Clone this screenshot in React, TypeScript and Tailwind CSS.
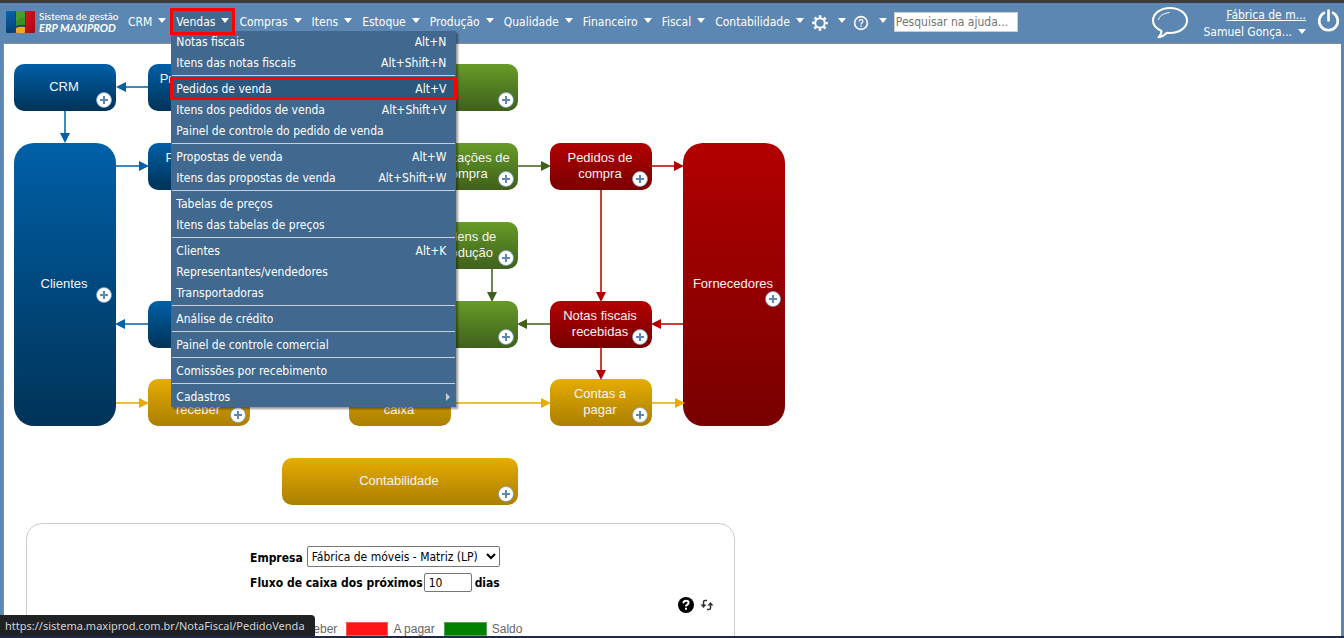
import { Fragment, useState } from "react";

type Tone = "blue" | "green" | "red" | "yellow";

interface FlowNode {
  id: string;
  lines: string[];
  tone: Tone;
  x: number;
  y: number;
  w?: number;
  h?: number;
  plusY?: number;
  noPlus?: boolean;
}

interface MenuEntry {
  label: string;
  keys?: string;
  submenu?: boolean;
}

const TONES: Record<Tone, string> = {
  blue: "from-[#0060a8] to-[#003358]",
  green: "from-[#669c28] to-[#3f601b]",
  red: "from-[#b30000] to-[#780000]",
  yellow: "from-[#e6ac00] to-[#ab7f00]",
};

const STROKES: Record<Tone, string> = {
  blue: "#0060a8",
  green: "#3f601b",
  red: "#b30000",
  yellow: "#e6ac00",
};

const NODES: FlowNode[] = [
  { id: "crm", lines: ["CRM"], tone: "blue", x: 9, y: 20 },
  { id: "propostas", lines: ["Propostas de", "venda"], tone: "blue", x: 143, y: 20 },
  { id: "planejamento", lines: [], tone: "green", x: 411, y: 20 },
  { id: "clientes", lines: ["Clientes"], tone: "blue", x: 9, y: 99, h: 283, plusY: 152 },
  { id: "pedidos-venda", lines: ["Pedidos de", "venda"], tone: "blue", x: 143, y: 99 },
  { id: "solicitacoes", lines: ["Solicitações de", "compra"], tone: "green", x: 411, y: 99 },
  { id: "pedidos-compra", lines: ["Pedidos de", "compra"], tone: "red", x: 545, y: 99 },
  { id: "fornecedores", lines: ["Fornecedores"], tone: "red", x: 678, y: 99, h: 283, plusY: 156 },
  { id: "ordens", lines: ["Ordens de", "produção"], tone: "green", x: 411, y: 178 },
  { id: "saidas", lines: [], tone: "blue", x: 143, y: 257 },
  { id: "estoque", lines: [], tone: "green", x: 411, y: 257 },
  { id: "notas-recebidas", lines: ["Notas fiscais", "recebidas"], tone: "red", x: 545, y: 257 },
  { id: "receber", lines: ["Contas a", "receber"], tone: "yellow", x: 143, y: 335 },
  { id: "caixa", lines: ["Fluxo de", "caixa"], tone: "yellow", x: 344, y: 335, noPlus: true },
  { id: "pagar", lines: ["Contas a", "pagar"], tone: "yellow", x: 545, y: 335 },
  { id: "contabilidade", lines: ["Contabilidade"], tone: "yellow", x: 277, y: 414, w: 236 },
];

// [tone, x1, y1, x2, y2], the head sits at the second point
const ARROWS: [Tone, number, number, number, number][] = [
  ["blue", 143, 43, 111, 43],
  ["blue", 60, 67, 60, 99],
  ["blue", 111, 122, 144, 122],
  ["blue", 143, 280, 110, 280],
  ["yellow", 111, 359, 144, 359],
  ["green", 513, 122, 546, 122],
  ["green", 487, 225, 487, 258],
  ["green", 545, 280, 512, 280],
  ["red", 647, 122, 679, 122],
  ["red", 596, 146, 596, 258],
  ["red", 678, 280, 646, 280],
  ["red", 596, 304, 596, 336],
  ["yellow", 446, 359, 546, 359],
  ["yellow", 647, 359, 680, 359],
];

const MENUS = ["CRM", "Vendas", "Compras", "Itens", "Estoque", "Produção", "Qualidade", "Financeiro", "Fiscal", "Contabilidade"];

const VENDAS: MenuEntry[][] = [
  [
    { label: "Notas fiscais", keys: "Alt+N" },
    { label: "Itens das notas fiscais", keys: "Alt+Shift+N" },
  ],
  [
    { label: "Pedidos de venda", keys: "Alt+V" },
    { label: "Itens dos pedidos de venda", keys: "Alt+Shift+V" },
    { label: "Painel de controle do pedido de venda" },
  ],
  [
    { label: "Propostas de venda", keys: "Alt+W" },
    { label: "Itens das propostas de venda", keys: "Alt+Shift+W" },
  ],
  [{ label: "Tabelas de preços" }, { label: "Itens das tabelas de preços" }],
  [{ label: "Clientes", keys: "Alt+K" }, { label: "Representantes/vendedores" }, { label: "Transportadoras" }],
  [{ label: "Análise de crédito" }],
  [{ label: "Painel de controle comercial" }],
  [{ label: "Comissões por recebimento" }],
  [{ label: "Cadastros", submenu: true }],
];

function Caret() {
  return (
    <svg className="mb-0.5 h-[5px] w-2 shrink-0" viewBox="0 0 8 5" fill="#fff">
      <path d="M0 0h8L4 5z" />
    </svg>
  );
}

function Logo() {
  return (
    <a href="#" className="flex items-center gap-1 text-white">
      <svg className="h-[22px] w-[29px]" viewBox="0 0 29 22">
        <defs>
          <linearGradient id="lb" x1="0" y1="0" x2="0" y2="1">
            <stop offset="0" stopColor="#0a62ac" />
            <stop offset="1" stopColor="#064075" />
          </linearGradient>
          <linearGradient id="lr" x1="0" y1="0" x2="1" y2="1">
            <stop offset="0" stopColor="#d8141c" />
            <stop offset="1" stopColor="#a30a12" />
          </linearGradient>
        </defs>
        <rect width="9" height="22" rx="1" fill="url(#lb)" />
        <rect x="9" width="11" height="22" fill="#17446b" />
        <path d="M10 0h9v14q-5-1-9 1z" fill="#3f8f27" />
        <path d="M10 0h9v6q-5 0-9 4z" fill="#55a532" opacity=".6" />
        <path d="M10 17q4-2 9-1v5q0 1-1 1h-7q-1 0-1-1z" fill="#f0ab1c" />
        <rect x="20" width="9" height="22" rx="1" fill="url(#lr)" />
      </svg>
      <span className="flex w-[78px] flex-col whitespace-nowrap font-['Lato'] leading-3">
        <span className="text-[10px] font-medium">Sistema de gestão</span>
        <span className="text-[11px] font-bold italic">ERP MAXIPROD</span>
      </span>
    </a>
  );
}

function VendasMenu() {
  return (
    <div className="absolute left-0 top-[22px] z-20 w-[285px] bg-[#41698f] shadow-[2px_2px_2px_rgba(0,0,0,0.4)]">
      {VENDAS.map((group, i) => (
        <Fragment key={group[0].label}>
          {i > 0 && <hr className="mx-px my-0.5 border-t border-[#c3d0dc]" />}
          {group.map((item) => (
            <a
              key={item.label}
              href="#"
              className={
                item.label === "Pedidos de venda"
                  ? "relative flex h-[21px] items-center justify-between bg-[#2d587e] pl-[5px] pr-2.5 outline-3 -outline-offset-2 outline-[#ff0000]"
                  : "flex h-[21px] items-center justify-between pl-[5px] pr-2.5 hover:bg-[#2d587e]"
              }
            >
              <span>{item.label}</span>
              {item.keys && <span>{item.keys}</span>}
              {item.submenu && (
                <svg className="-mr-1 h-2 w-1" viewBox="0 0 4 8" fill="#ccc">
                  <path d="M0 0l4 4-4 4z" />
                </svg>
              )}
            </a>
          ))}
        </Fragment>
      ))}
    </div>
  );
}

function Header() {
  return (
    <header className="flex h-10 items-center justify-between bg-[#5c87b2] pl-1.5 pr-1 text-white">
      <div className="flex items-center pb-[3px]">
        <Logo />
        <nav className="ml-1.5 flex items-center">
          {MENUS.map((name) =>
            name === "Vendas" ? (
              <div key={name} className="relative">
                <button className="flex h-[25px] items-center gap-1.5 bg-[#41698f] px-[5px]">
                  {name}
                  <Caret />
                </button>
                <VendasMenu />
                <span className="pointer-events-none absolute inset-0 z-30 outline-3 -outline-offset-2 outline-[#ff0000]" />
              </div>
            ) : (
              <button key={name} className="flex h-[25px] items-center gap-1.5 px-[5px]">
                {name}
                <Caret />
              </button>
            ),
          )}
          <button aria-label="Configurações" className="flex items-center gap-2.5 px-[3px]">
            <svg className="mt-0.5 h-4 w-4" viewBox="0 0 16 16" fill="none" stroke="#fff">
              <circle cx="8" cy="8" r="4.800" strokeWidth="2" />
              <circle cx="8" cy="8" r="6.600" strokeWidth="2.400" strokeDasharray="2.6 2.584" strokeDashoffset="1.3" />
            </svg>
            <Caret />
          </button>
          <button aria-label="Ajuda" className="ml-px flex items-center gap-2.5 px-[3px]">
            <svg className="mt-0.5 h-4 w-4" viewBox="0 0 16 16" fill="none" stroke="#fff">
              <circle cx="8" cy="8" r="6.400" strokeWidth="1.600" />
              <path d="M6 6.600q0-2 2-2t2 1.700c0 1.400-2 1.400-2 3.100M8 10.600v1.300" strokeWidth="1.200" />
            </svg>
            <Caret />
          </button>
        </nav>
        <input
          type="text"
          aria-label="Pesquisar na ajuda"
          placeholder="Pesquisar na ajuda..."
          className="ml-1 h-5 w-[124px] border border-[#ccc] bg-white px-px text-black placeholder:text-[#757575]"
        />
      </div>
      <div className="flex items-center gap-[11px]">
        <button aria-label="Conversa" className="mr-1">
          <svg className="h-8 w-9" viewBox="0 0 36 32" fill="none" stroke="#fff" strokeWidth="2" strokeLinejoin="round">
            <path d="M9.500 23.800C4 21.500 1 17.800 1 13.500 1 6.500 8.500 1 18 1s17 5.500 17 12.500S27.500 26 18 26c-1 0-2-.1-3-.2-2.500 2.600-5 4-8.500 4.400 2-1.800 3-3.600 3-6.400z" />
            <path d="M6.500 13c.5-4 4.500-6.500 11-7.500" strokeWidth="1" />
          </svg>
        </button>
        <div className="flex flex-col items-end pt-0.5 leading-[17px]">
          <a href="#" className="underline">Fábrica de m...</a>
          <button className="flex items-center gap-1.5">
            Samuel Gonça...
            <Caret />
          </button>
        </div>
        <button aria-label="Sair" className="pb-1">
          <svg className="h-6 w-[23px]" viewBox="0 0 23 24" fill="none" stroke="#fff" strokeWidth="2.600" strokeLinecap="round">
            <path d="M7 3.800a9.300 9.300 0 1 0 9 0M11.500 1.500v10" />
          </svg>
        </button>
      </div>
    </header>
  );
}

function Arrow({ tone, from, to }: { tone: Tone; from: [number, number]; to: [number, number] }) {
  const angle = (Math.atan2(to[1] - from[1], to[0] - from[0]) * 180) / Math.PI;
  const length = Math.hypot(to[0] - from[0], to[1] - from[1]);
  return (
    <g transform={`translate(${to[0]} ${to[1]}) rotate(${angle})`} fill={STROKES[tone]}>
      <rect x={-length} y="-0.75" width={length - 6} height="1.5" />
      <path d="M0 0l-10-5v10z" />
    </g>
  );
}

function FlowBox({ node }: { node: FlowNode }) {
  const { w = 102, h = 47, plusY = 36 } = node;
  return (
    <div
      className={`absolute flex items-center justify-center bg-linear-to-b text-center ${TONES[node.tone]} ${h > 47 ? "rounded-[20px]" : "rounded-[10px]"}`}
      style={{ left: node.x, top: node.y, width: w, height: h }}
    >
      <a href="#" className="pb-0.5 pr-0.5 font-['Liberation_Sans',sans-serif] text-[13px] leading-4 text-[#f4f4f4]">
        {node.lines.map((line) => (
          <span key={line} className="block whitespace-nowrap">{line}</span>
        ))}
      </a>
      {!node.noPlus && (
        <button
          aria-label="Adicionar"
          className="absolute right-1 h-4 w-4 -translate-y-1/2"
          style={{ top: plusY }}
        >
          <svg viewBox="0 0 16 16" className="h-4 w-4">
            <circle cx="8" cy="8" r="7.500" fill="#fff" stroke="#7d9cc0" strokeWidth="0.800" />
            <path d="M8 4v8M4 8h8" stroke="#5c87b2" strokeWidth="2" />
          </svg>
        </button>
      )}
    </div>
  );
}

function CashFlow() {
  const [days, setDays] = useState("10");
  return (
    <section className="ml-[21px] w-[709px] rounded-2xl border border-[#ccc] pb-40 pt-[22px] text-black">
      <div className="ml-[223px] flex flex-col items-start gap-1.5 font-bold">
        <div className="flex items-center gap-1">
          <label htmlFor="empresa" className="pt-0.5">Empresa</label>
          <select
            id="empresa"
            className="h-[21px] w-[193px] rounded-xs border border-[#767676] bg-white font-normal"
          >
            <option>Fábrica de móveis - Matriz (LP)</option>
          </select>
        </div>
        <div className="flex items-center gap-px">
          <label htmlFor="dias">Fluxo de caixa dos próximos</label>
          <input
            id="dias"
            type="text"
            value={days}
            onChange={(e) => setDays(e.target.value)}
            className="mr-0.5 h-[19px] w-12 rounded-xs border border-[#767676] bg-white px-1 font-normal"
          />
          <span>dias</span>
        </div>
      </div>
      <div className="mr-5 mt-[5px] flex items-center justify-end gap-1.5">
        <button aria-label="Ajuda">
          <svg className="h-4 w-4" viewBox="0 0 16 16">
            <circle cx="8" cy="8" r="8" />
            <path d="M5.400 6.300q0-2.500 2.600-2.500t2.600 2.200C10.600 7.700 8 7.700 8 9.600M8 10.800v2" fill="none" stroke="#fff" strokeWidth="2" />
          </svg>
        </button>
        <button aria-label="Atualizar">
          <svg className="h-3 w-[14px]" viewBox="0 0 14 12" fill="none" stroke="#333" strokeWidth="1.500">
            <path d="M7 1.500H5Q3.500 1.500 3.500 3v4M7 10.500h2q1.500 0 1.500-1.500V5" />
            <path d="M.5 5.500h6l-3 3.500zM7.500 6.500h6l-3-3.500z" fill="#333" stroke="none" />
          </svg>
        </button>
      </div>
      <div className="mt-2 flex items-center gap-[5px] pl-[212px] font-['Liberation_Sans',sans-serif] text-[#666]">
        <span className="h-[14px] w-[42px] border border-[#ccc] bg-[#3366cc]" />
        <span className="mr-1">A receber</span>
        <span className="h-[14px] w-[42px] border border-[#ff5555] bg-[#ff1515]" />
        <span className="mr-1">A pagar</span>
        <span className="h-[14px] w-[43px] border border-[#55a555] bg-[#008000]" />
        <span>Saldo</span>
      </div>
    </section>
  );
}

export default function App() {
  return (
    <div className="flex h-screen flex-col overflow-hidden border-t-3 border-[#3c3c3c] bg-[#5c87b2] font-['DejaVu_Sans_Condensed','DejaVu_Sans',sans-serif] text-[12px] leading-4">
      <Header />
      <main className="mx-[3px] min-h-0 flex-1 overflow-hidden border-l border-t border-[#8c8c8c] bg-white pl-px">
        <div className="relative h-[479px]">
          {NODES.map((node) => (
            <FlowBox key={node.id} node={node} />
          ))}
          <svg className="pointer-events-none absolute left-0 top-0 h-full w-[800px]">
            {ARROWS.map(([tone, x1, y1, x2, y2]) => (
              <Arrow key={`${x1}-${y1}-${x2}`} tone={tone} from={[x1, y1]} to={[x2, y2]} />
            ))}
          </svg>
        </div>
        <CashFlow />
      </main>
      <footer className="fixed inset-x-0 bottom-0 z-40 border-b-2 border-[#1e2a45]">
        <div className="w-fit rounded-tr bg-[#202124] pb-px pl-[5px] pr-2.5 pt-0.5 font-['Noto_Sans',sans-serif] text-[11px] leading-[18px] text-[#d0d3d7]">
          https://sistema.maxiprod.com.br/NotaFiscal/PedidoVenda
        </div>
      </footer>
    </div>
  );
}
